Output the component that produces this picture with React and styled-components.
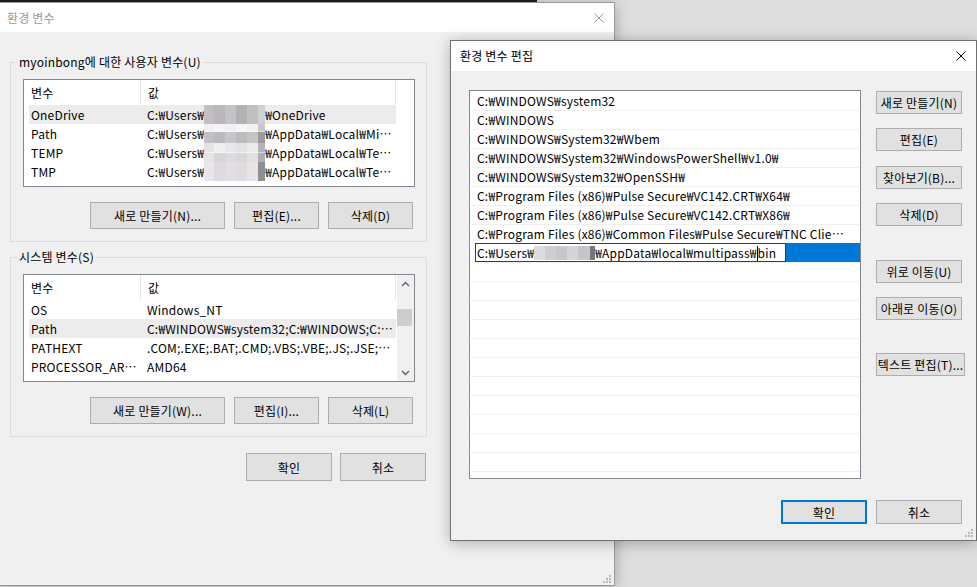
import React from 'react';
import styled, { createGlobalStyle, css } from 'styled-components';

const GlobalStyle = createGlobalStyle`
  html, body { margin: 0; padding: 0; }
  body {
    background: #dedede;
    font-family: "Noto Sans CJK KR", "Noto Sans", sans-serif;
    font-size: 12px;
    letter-spacing: 0.2px;
    color: #000;
    overflow: hidden;
  }
  * { box-sizing: border-box; }
`;

const Desktop = styled.div`
  position: relative;
  width: 977px;
  height: 587px;
  overflow: hidden;
  background: #dedede;
`;

const BackEdge = styled.div`
  position: absolute;
  left: 0;
  top: 0;
  width: 537px;
  height: 2px;
  background: #1e1e1e;
`;

const Window = styled.div`
  position: absolute;
  left: ${p => p.$left}px;
  top: ${p => p.$top}px;
  width: ${p => p.$width}px;
  height: ${p => p.$height}px;
  background: #f0f0f0;
  border: 1px solid ${p => (p.$active ? '#707070' : '#9a9a9a')};
  box-shadow: 0 2px 14px rgba(0, 0, 0, 0.28);
  display: flex;
  flex-direction: column;
`;

const TitleBar = styled.div`
  height: ${p => p.$h}px;
  flex: none;
  background: #fff;
  display: flex;
  align-items: center;
  justify-content: space-between;
  padding-left: ${p => p.$pad}px;
  padding-right: 10px;
`;

const Title = styled.span`
  font-size: 12px;
  line-height: 16px;
  color: ${p => (p.$inactive ? '#9a9a9a' : '#000')};
`;

const CloseIcon = ({ color }) => (
  <svg width="10" height="10" viewBox="0 0 10 10">
    <path d="M0.5 0.5 L9.5 9.5 M9.5 0.5 L0.5 9.5" stroke={color} strokeWidth="1" fill="none" />
  </svg>
);

const MainBody = styled.div`
  flex: 1;
  padding-left: 12px;
  display: flex;
  flex-direction: column;
  width: 429px;
`;

const Group = styled.fieldset`
  margin: ${p => p.$mt}px 0 0 0;
  width: 417px;
  padding: 9px 11px 12px 12px;
  border: 1px solid #dcdcdc;
  min-width: 0;
`;

const Legend = styled.legend`
  margin-left: -6px;
  padding: 0 2px;
  line-height: 16px;
  height: 16px;
  font-size: 12px;
`;

const ListView = styled.div`
  width: 392px;
  height: 108px;
  border: 1px solid #828790;
  background: #fff;
  display: flex;
  overflow: hidden;
`;

const ListContent = styled.div`
  width: 372px;
  flex: none;
  display: flex;
  flex-direction: column;
`;

const HeaderRow = styled.div`
  height: 25px;
  flex: none;
  display: flex;
`;

const HeaderCell = styled.div`
  width: ${p => p.$w}px;
  flex: none;
  padding-left: 7px;
  border-right: 1px solid #e5e5e5;
  line-height: 25px;
`;

const Row = styled.div`
  height: 19px;
  flex: none;
  margin-left: 5px;
  width: 367px;
  display: grid;
  grid-template-columns: 118px 249px;
  line-height: 19px;
  background: ${p => (p.$selected ? '#ececec' : 'transparent')};
`;

const Cell = styled.div`
  padding-left: ${p => p.$pl ?? 0}px;
  padding-right: 3px;
  white-space: nowrap;
  overflow: hidden;
  text-overflow: ellipsis;
`;

const Mosaic = styled.span`
  display: inline-block;
  width: ${p => p.$w}px;
  height: ${p => p.$h}px;
  vertical-align: top;
`;

const ScrollBar = styled.div`
  width: 17px;
  flex: none;
  margin-left: 1px;
  background: #f0f0f0;
  display: flex;
  flex-direction: column;
  align-items: center;
`;

const ScrollArrow = styled.div`
  height: 17px;
  width: 17px;
  display: flex;
  align-items: center;
  justify-content: center;
`;

const ScrollTrack = styled.div`
  flex: 1;
  width: 100%;
  padding-top: 17px;
`;

const Thumb = styled.div`
  width: 15px;
  height: 17px;
  background: #cdcdcd;
`;

const Chevron = ({ up }) => (
  <svg width="9" height="6" viewBox="0 0 9 6">
    <path d={up ? 'M1 5 L4.5 1.5 L8 5' : 'M1 1 L4.5 4.5 L8 1'} stroke="#606060" strokeWidth="1.4" fill="none" />
  </svg>
);

const ButtonRow = styled.div`
  display: flex;
  justify-content: flex-end;
  gap: 9px;
  margin-top: 15px;
  margin-right: 2px;
`;

const Button = styled.button`
  width: ${p => p.$w}px;
  height: ${p => p.$h || 27}px;
  margin-top: ${p => p.$mt || 0}px;
  flex: none;
  padding: 0;
  background: #e1e1e1;
  border: 1px solid #adadad;
  font-family: inherit;
  font-size: 12px;
  letter-spacing: 0.2px;
  color: #000;
  white-space: nowrap;
  overflow: visible;
  display: flex;
  align-items: center;
  justify-content: center;
  ${p =>
    p.$primary &&
    css`
      border: 2px solid #0078d7;
    `}
`;

const DialogButtons = styled.div`
  display: flex;
  justify-content: flex-end;
  gap: 8px;
  margin-top: 16px;
  width: 416px;
`;

const Grip = styled.svg`
  position: absolute;
  right: ${p => p.$r}px;
  bottom: ${p => p.$b}px;
`;

const ResizeGrip = ({ r, b }) => (
  <Grip $r={r} $b={b} width="8" height="8" viewBox="0 0 8 8">
    {[
      [6, 0],
      [3, 3],
      [6, 3],
      [0, 6],
      [3, 6],
      [6, 6],
    ].map(([x, y]) => (
      <rect key={`${x}-${y}`} x={x} y={y} width="2" height="2" fill="#b8b8b8" />
    ))}
  </Grip>
);

/* ---------- edit dialog ---------- */

const EditBody = styled.div`
  flex: 1;
  padding: 19px 14px 0 18px;
  display: flex;
  flex-direction: column;
`;

const EditMain = styled.div`
  display: flex;
  gap: 15px;
`;

const PathList = styled.div`
  width: 392px;
  height: 389px;
  flex: none;
  border: 1px solid #828790;
  background: #fff;
  padding-top: 1px;
  overflow: hidden;
`;

const PathRow = styled.div`
  height: 19px;
  margin: 0 1px;
  border-bottom: 1px solid #f0f0f0;
  padding-left: 6px;
  padding-right: 12px;
  line-height: 18px;
  white-space: nowrap;
  overflow: hidden;
  text-overflow: ellipsis;
`;

const EditingRow = styled.div`
  height: 19px;
  display: flex;
  align-items: flex-end;
  padding-left: 5px;
  border-bottom: 1px solid #f0f0f0;
`;

const EditBox = styled.div`
  width: 311px;
  height: 19px;
  flex: none;
  background: #fff;
  border: 1px solid #3c3c3c;
  padding-left: 1px;
  line-height: 17px;
  white-space: nowrap;
  overflow: hidden;
`;

const SelectionFill = styled.div`
  flex: 1;
  height: 19px;
  background: #0078d7;
`;

const Caret = styled.span`
  display: inline-block;
  width: 1px;
  height: 15px;
  background: #000;
  vertical-align: -3px;
`;

const SideButtons = styled.div`
  display: flex;
  flex-direction: column;
  width: 86px;
  flex: none;
`;

const EditFooter = styled.div`
  display: flex;
  justify-content: flex-end;
  gap: 9px;
  margin-top: 21px;
`;

const blur1 =
  'linear-gradient(90deg,#c2bec4 0 17%,#bab7bc 17% 35%,#c6c3c8 35% 53%,#b3b1b4 53% 70%,#c1bfc2 70% 88%,#d0d0d2 88%)';
const blurPath =
  'linear-gradient(90deg,#f1f0f2 0 17%,#f4f4f5 17% 35%,#f0eff1 35% 53%,#f6f6f6 53% 70%,#f2f2f2 70% 88%,#c9c9cb 88%) top/100% 40% no-repeat, linear-gradient(90deg,#c3c0c5 0 17%,#bcb9be 17% 35%,#c8c5c9 35% 53%,#bdbbbe 53% 70%,#c6c4c7 70% 88%,#9a9a9c 88%) bottom/100% 60% no-repeat';
const blurTemp =
  'linear-gradient(90deg,#e6e3e7 0 17%,#efeff0 17% 35%,#e9e7ea 35% 53%,#e4e2e5 53% 70%,#eceaec 70% 88%,#b5b5b7 88%) top/100% 50% no-repeat, linear-gradient(90deg,#e5e3e6 0 17%,#d7d4d8 17% 35%,#dedbe0 35% 53%,#d9d6da 53% 70%,#e2dfe1 70% 88%,#b0b0b2 88%) bottom/100% 50% no-repeat';
const blurTmp =
  'linear-gradient(90deg,#e8e6e9 0 17%,#dcdadd 17% 35%,#e1dfe2 35% 53%,#dedcdf 53% 70%,#e6e4e6 70% 88%,#8f8f92 88%)';
const blurEdit =
  'linear-gradient(90deg,#dcdbde 0 18%,#cfcdd1 18% 36%,#c9c7cb 36% 54%,#d6d4d8 54% 72%,#c7c5c8 72% 92%,#777 92%)';

const userVars = [
  ['OneDrive', 'OneDrive', blur1, true],
  ['Path', 'AppData₩Local₩Microsoft₩WindowsApps', blurPath, false],
  ['TEMP', 'AppData₩Local₩Temp', blurTemp, false],
  ['TMP', 'AppData₩Local₩Temp', blurTmp, false],
];

const sysVars = [
  ['OS', 'Windows_NT', false],
  ['Path', 'C:₩WINDOWS₩system32;C:₩WINDOWS;C:₩WINDOWS₩System32₩Wbem;C:₩WINDOWS₩System32₩WindowsPowerShell₩v1.0₩', true],
  ['PATHEXT', '.COM;.EXE;.BAT;.CMD;.VBS;.VBE;.JS;.JSE;.WSF;.WSH;.MSC', false],
  ['PROCESSOR_ARCHITECTURE', 'AMD64', false],
  ['PROCESSOR_IDENTIFIER', 'Intel64 Family 6 Model 142 Stepping 10, GenuineIntel', false],
];

const paths = [
  'C:₩WINDOWS₩system32',
  'C:₩WINDOWS',
  'C:₩WINDOWS₩System32₩Wbem',
  'C:₩WINDOWS₩System32₩WindowsPowerShell₩v1.0₩',
  'C:₩WINDOWS₩System32₩OpenSSH₩',
  'C:₩Program Files (x86)₩Pulse Secure₩VC142.CRT₩X64₩',
  'C:₩Program Files (x86)₩Pulse Secure₩VC142.CRT₩X86₩',
  'C:₩Program Files (x86)₩Common Files₩Pulse Secure₩TNC Client Plugin₩',
];

const sideButtons = [
  ['새로 만들기(N)', 1, 86],
  ['편집(E)', 14, 86],
  ['찾아보기(B)...', 15, 86],
  ['삭제(D)', 14, 86],
  ['위로 이동(U)', 34, 86],
  ['아래로 이동(O)', 14, 86],
  ['텍스트 편집(T)...', 33, 89],
];

export default function App() {
  return (
    <>
      <GlobalStyle />
      <Desktop>
        <BackEdge />

        <Window $left={-3} $top={2} $width={618} $height={584}>
          <TitleBar $h={29} $pad={9}>
            <Title $inactive>환경 변수</Title>
            <CloseIcon color="#9a9a9a" />
          </TitleBar>
          <MainBody>
            <Group $mt={22}>
              <Legend>myoinbong에 대한 사용자 변수(U)</Legend>
              <ListView>
                <ListContent>
                  <HeaderRow>
                    <HeaderCell $w={117}>변수</HeaderCell>
                    <HeaderCell $w={255}>값</HeaderCell>
                  </HeaderRow>
                  {userVars.map(([name, tail, blur, sel]) => (
                    <Row key={name} $selected={sel}>
                      <Cell $pl={2}>{name}</Cell>
                      <Cell>
                        C:₩Users₩
                        <Mosaic $w={61} $h={19} style={{ background: blur }} />
                        ₩{tail}
                      </Cell>
                    </Row>
                  ))}
                </ListContent>
              </ListView>
              <ButtonRow>
                <Button $w={135}>새로 만들기(N)...</Button>
                <Button $w={85}>편집(E)...</Button>
                <Button $w={85}>삭제(D)</Button>
              </ButtonRow>
            </Group>

            <Group $mt={7}>
              <Legend>시스템 변수(S)</Legend>
              <ListView>
                <ListContent>
                  <HeaderRow>
                    <HeaderCell $w={117}>변수</HeaderCell>
                    <HeaderCell $w={255}>값</HeaderCell>
                  </HeaderRow>
                  {sysVars.map(([name, value, sel]) => (
                    <Row key={name} $selected={sel}>
                      <Cell $pl={2}>{name}</Cell>
                      <Cell>{value}</Cell>
                    </Row>
                  ))}
                </ListContent>
                <ScrollBar>
                  <ScrollArrow>
                    <Chevron up />
                  </ScrollArrow>
                  <ScrollTrack>
                    <Thumb />
                  </ScrollTrack>
                  <ScrollArrow>
                    <Chevron />
                  </ScrollArrow>
                </ScrollBar>
              </ListView>
              <ButtonRow>
                <Button $w={135}>새로 만들기(W)...</Button>
                <Button $w={85}>편집(I)...</Button>
                <Button $w={85}>삭제(L)</Button>
              </ButtonRow>
            </Group>

            <DialogButtons>
              <Button $w={86} $h={28}>확인</Button>
              <Button $w={86} $h={28}>취소</Button>
            </DialogButtons>
          </MainBody>
          <ResizeGrip r={3} b={2} />
        </Window>

        <Window $left={450} $top={40} $width={527} $height={501} $active>
          <TitleBar $h={30} $pad={9}>
            <Title>환경 변수 편집</Title>
            <CloseIcon color="#000" />
          </TitleBar>
          <EditBody>
            <EditMain>
              <PathList>
                {paths.map(p => (
                  <PathRow key={p}>{p}</PathRow>
                ))}
                <EditingRow>
                  <EditBox>
                    C:₩Users₩
                    <Mosaic $w={61} $h={14} style={{ background: blurEdit, marginTop: 2 }} />
                    ₩AppData₩local₩multipass₩
                    <Caret />
                    bin
                  </EditBox>
                  <SelectionFill />
                </EditingRow>
                {Array.from({ length: 12 }, (_, i) => (
                  <PathRow key={`empty-${i}`} />
                ))}
              </PathList>
              <SideButtons>
                {sideButtons.map(([label, mt, w]) => (
                  <Button key={label} $w={w} $h={23} $mt={mt}>
                    {label}
                  </Button>
                ))}
              </SideButtons>
            </EditMain>
            <EditFooter>
              <Button $w={86} $h={24} $primary>확인</Button>
              <Button $w={86} $h={24}>취소</Button>
            </EditFooter>
          </EditBody>
          <ResizeGrip r={3} b={3} />
        </Window>
      </Desktop>
    </>
  );
}
